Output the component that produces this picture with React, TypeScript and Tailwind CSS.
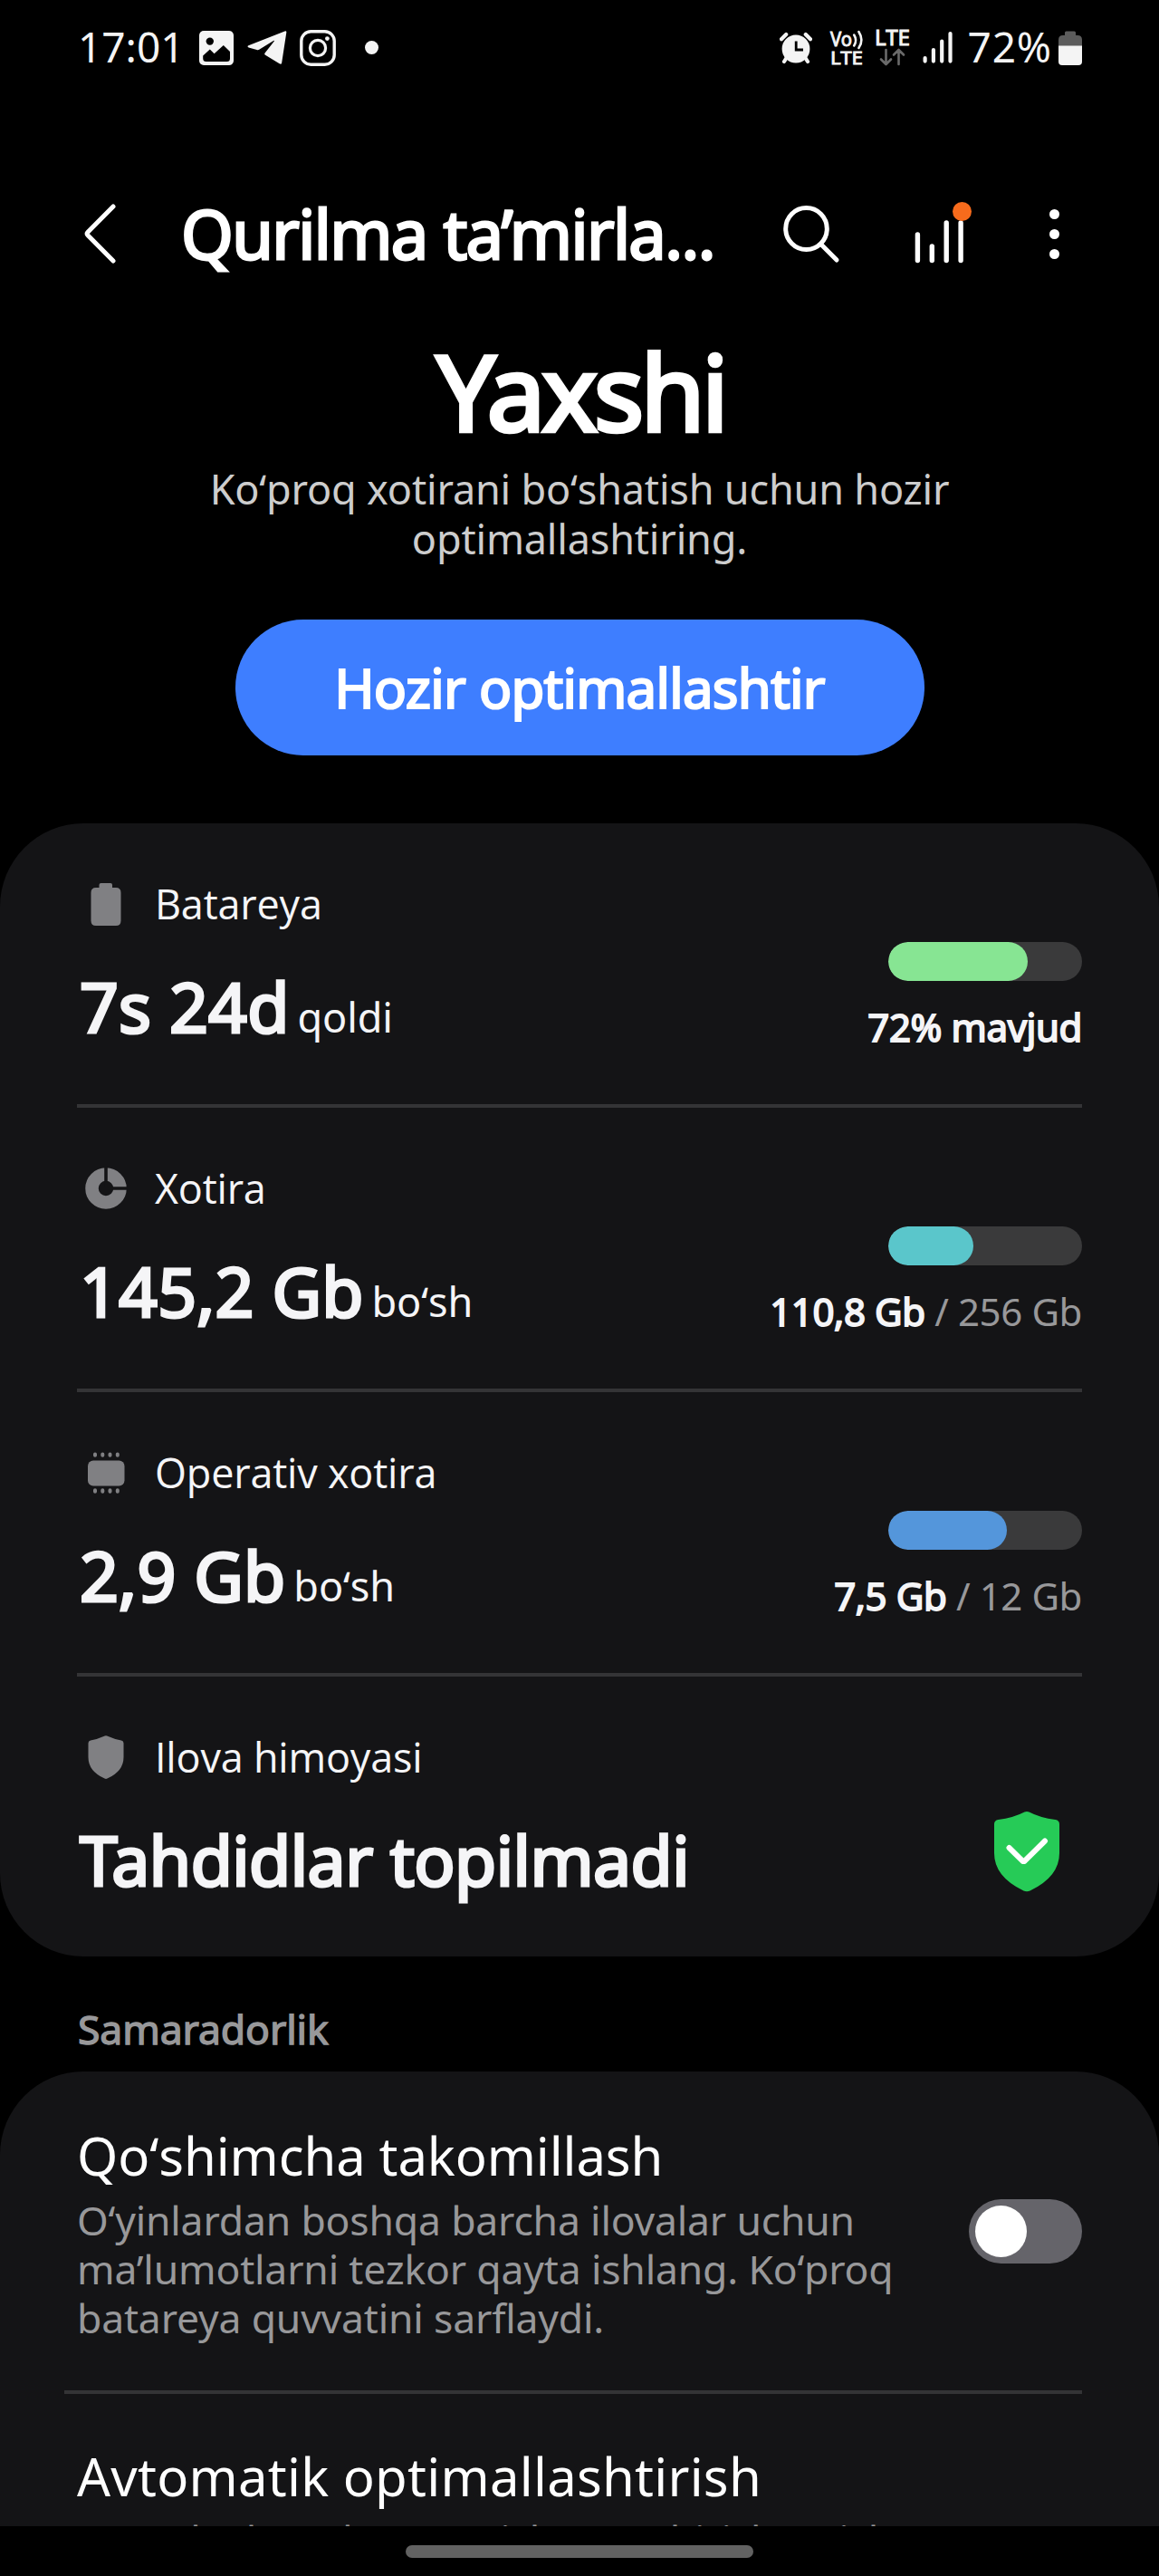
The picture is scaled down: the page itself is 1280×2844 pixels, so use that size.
import type { ReactNode } from "react";

const StatusBar: React.FC = () => {
  return (
    <div className="h-[102px] pl-[86px] pr-[85px] flex items-center justify-between text-[#f4f4f4]">
      <div className="flex items-center">
        <span className="text-[46px] leading-none">17:01</span>
        {/* gallery */}
        <svg className="ml-[16px] mt-1 w-[38px] h-[38px]" viewBox="0 0 38 38">
          <rect width="38" height="38" rx="5" fill="currentColor" />
          <circle cx="11.8" cy="11.6" r="4.2" fill="#000" />
          <path
            d="M4.2 27.5 11.8 20.6 16.6 25.2 26.8 16 34 23V30.5Q34 34 30.5 34H7.7Q4.2 34 4.2 30.5Z"
            fill="#000"
          />
        </svg>
        {/* telegram */}
        <svg className="ml-[15px] mt-1 w-[44px] h-[38px]" viewBox="0 0 44 38">
          <path
            d="M41.5.4Q43.6-.3 43.3 2L38.2 35.2Q37.8 37.6 35.6 36.3L20 26.8Q18.6 25.8 19.6 24.5L29.8 11.6Q30.3 10.4 29 10.9L13.2 20.8Q12 21.5 10.6 21L1.6 18.4Q-.6 17.4 1.4 16.2Z"
            fill="currentColor"
          />
        </svg>
        {/* instagram */}
        <svg className="ml-[14px] mt-1 w-[40px] h-[40px]" viewBox="0 0 40 40" fill="none" stroke="currentColor">
          <rect x="1.8" y="1.8" width="36.4" height="36.4" rx="10.5" strokeWidth="3.4" />
          <circle cx="20" cy="20" r="8.6" strokeWidth="3.2" />
          <circle cx="30.4" cy="9.6" r="2.4" fill="currentColor" stroke="none" />
        </svg>
        <span className="ml-[32px] mt-0.5 size-[15px] rounded-full bg-[#f4f4f4]" />
      </div>

      <div className="flex items-center">
        {/* alarm */}
        <svg className="mt-1 w-[36px] h-[36px]" viewBox="0 0 36 36">
          <circle cx="18" cy="19" r="15.4" fill="currentColor" />
          <path
            d="M2 8.2 7.2 3M34 8.2 28.8 3M7.5 29 5 33M28.5 29 31 33"
            stroke="currentColor"
            strokeWidth="4.2"
            strokeLinecap="round"
          />
          <path d="M18.2 10.5V20H26" fill="none" stroke="#000" strokeWidth="2.8" />
        </svg>
        {/* volte */}
        <svg className="ml-[20px] mt-1 w-[38px] h-[40px] overflow-visible" viewBox="0 0 38 40" fill="currentColor">
          <text x="0" y="17.5" fontSize="21" textLength="24" lengthAdjust="spacingAndGlyphs" stroke="currentColor" strokeWidth="0.9">
            Vo
          </text>
          <path
            d="M26.2 5.5Q30 11.5 26.2 17.5M31.4 2Q37.4 11.5 31.4 20"
            fill="none"
            stroke="currentColor"
            strokeWidth="2.6"
            strokeLinecap="round"
          />
          <text x="0" y="38" fontSize="20.5" textLength="36" lengthAdjust="spacingAndGlyphs" stroke="currentColor" strokeWidth="0.9">
            LTE
          </text>
        </svg>
        {/* lte */}
        <svg className="ml-[11px] mt-1 w-[40px] h-[40px] overflow-visible" viewBox="0 0 40 40" fill="currentColor">
          <text x="0" y="17" fontSize="23.5" textLength="39" lengthAdjust="spacingAndGlyphs" stroke="currentColor" strokeWidth="1">
            LTE
          </text>
          <path
            d="M12.5 22V37.5M7 32.5 12.5 38 18 32.5M26.5 38V22.5M21 27.5 26.5 22 32 27.5"
            fill="none"
            stroke="#6a6a6a"
            strokeWidth="2.6"
            strokeLinecap="round"
            strokeLinejoin="round"
          />
        </svg>
        {/* signal */}
        <svg
          className="ml-[13px] mt-0.5 w-[33px] h-[37px]"
          viewBox="0 0 33 37"
          stroke="currentColor"
          strokeWidth="4.2"
          strokeLinecap="round"
        >
          <path d="M2.6 30V33.6M11.9 21V33.6M21.2 11.5V33.6M30.5 3V33.6" />
        </svg>
        <span className="ml-[16px] text-[46px] leading-none tracking-[0.9px]">72%</span>
        {/* battery */}
        <svg className="ml-[7px] mt-1 w-[26px] h-[38px]" viewBox="0 0 26 38">
          <path d="M7 5V2Q7 .5 8.5 .5H17.5Q19 .5 19 2V5H21Q26 5 26 10V17H0V10Q0 5 5 5Z" fill="#5c5c5c" />
          <path d="M0 16.5H26V34Q26 38 22 38H4Q0 38 0 34Z" fill="currentColor" />
        </svg>
      </div>
    </div>
  );
};

const Header: React.FC = () => {
  return (
    <header className="mt-[100px] h-[112px] pl-[92px] pr-[110px] flex items-center">
      <svg className="w-[37px] h-[66px]" viewBox="0 0 37 66" fill="none" stroke="#fff" strokeWidth="5" strokeLinecap="round" strokeLinejoin="round">
        <path d="M33 3 5 31.2Q3.3 33 5 34.8L33 63" />
      </svg>
      <h1 className="ml-[71px] text-[74px] leading-none tracking-[-1.6px] whitespace-nowrap [-webkit-text-stroke:2.8px]">
        Qurilma ta’mirla...
      </h1>
      <div className="ml-auto flex items-center">
        <svg className="w-[64px] h-[66px]" viewBox="0 0 64 66" fill="none" stroke="#fff" strokeWidth="5" strokeLinecap="round">
          <ellipse cx="26.5" cy="27.5" rx="22.8" ry="23" />
          <path d="M42.5 44.5 60 62" />
        </svg>
        <div className="relative ml-[81px]">
          <svg className="w-[56px] h-[66px]" viewBox="0 0 56 66" stroke="#fff" strokeWidth="5.4" strokeLinecap="round">
            <path d="M4.4 34V62.5M20.3 47V62.5M36.2 21V62.5M52.1 21V62.5" />
          </svg>
          <span className="absolute top-[-2px] right-[-8px] size-[21px] rounded-full bg-[#f76b1c]" />
        </div>
        <div className="ml-[94px] flex flex-col gap-[11px]">
          <span className="size-[11px] rounded-full bg-white" />
          <span className="size-[11px] rounded-full bg-white" />
          <span className="size-[11px] rounded-full bg-white" />
        </div>
      </div>
    </header>
  );
};

const Hero: React.FC = () => {
  return (
    <section className="flex flex-col items-center text-center">
      <h2 className="mt-[48px] pl-[3px] text-[115px] leading-[140px] tracking-[-3.6px] [-webkit-text-stroke:4.6px]">
        Yaxshi
      </h2>
      <p className="mt-[11px] w-[900px] text-[45px] leading-[54.6px] tracking-[-0.18px] text-[#cdcdcd]">
        Koʻproq xotirani boʻshatish uchun hozir
        <br />
        optimallashtiring.
      </p>
      <button className="mt-[62px] w-[761px] h-[150px] rounded-full bg-[#3e7eff] text-white text-[60px] leading-none tracking-[-0.75px] [-webkit-text-stroke:2.2px]">
        Hozir optimallashtir
      </button>
    </section>
  );
};

const BatteryIcon = () => (
  <svg className="w-[46px] h-[50px]" viewBox="0 0 46 50" fill="#808083">
    <path d="M15.5 7V4Q15.5 2 17.5 2H28Q30 2 30 4V7H34Q39.5 7 39.5 12.5V43.5Q39.5 49 34 49H12Q6.5 49 6.5 43.5V12.5Q6.5 7 12 7Z" />
  </svg>
);

const StorageIcon = () => (
  <svg className="w-[46px] h-[50px]" viewBox="0 0 46 50">
    <circle cx="23" cy="25" r="15.5" fill="none" stroke="#808083" strokeWidth="14.5" />
    <path d="M23 23.5V1M25 25H47" stroke="#141416" strokeWidth="3.6" />
  </svg>
);

const RamIcon = () => (
  <svg className="w-[46px] h-[50px]" viewBox="0 0 46 50" fill="#808083">
    <rect x="3" y="11.5" width="40.5" height="28" rx="6" />
    <path
      d="M11 4.400V5.8M19.3 4.4V5.8M27.5 4.4V5.8M35.8 4.4V5.8M11 44.3V45.7M19.3 44.3V45.7M27.5 44.3V45.7M35.8 44.3V45.7"
      stroke="#808083"
      strokeWidth="4"
      strokeLinecap="round"
    />
  </svg>
);

const ShieldIcon = () => (
  <svg className="w-[46px] h-[50px]" viewBox="0 0 46 50" fill="#808083">
    <path d="M21.8 1.5Q23 1 24.2 1.5Q32 5 40 6.5Q42.5 7 42.5 9.5V25Q42.5 40.5 24.5 48.6Q23 49.3 21.5 48.6Q3.5 40.5 3.5 25V9.5Q3.5 7 6 6.5Q14 5 21.8 1.5Z" />
  </svg>
);

type RowProps = {
  icon: ReactNode;
  label: string;
  value: string;
  unit?: string;
  last?: boolean;
  children: ReactNode;
};

const Row: React.FC<RowProps> = ({ icon, label, value, unit, last, children }) => {
  return (
    <div
      className={
        last
          ? "h-[309px] flex justify-between"
          : "h-[314px] flex justify-between border-b-4 border-[#343436]"
      }
    >
      <div className="pt-[59px]">
        <div className="h-[60px] pl-[9px] flex items-center">
          {icon}
          <span className="ml-[31px] font-['Open_Sans'] text-[45px] leading-[60px] tracking-[-0.2px]">{label}</span>
        </div>
        <p
          className={
            unit
              ? "mt-[33px] ml-[3px] text-[75px] leading-[100px] tracking-[0.2px] whitespace-nowrap"
              : "mt-[33px] ml-[3px] text-[75px] leading-[100px] tracking-[-0.5px] whitespace-nowrap"
          }
        >
          <span className="[-webkit-text-stroke:3.2px]">{value}</span>
          {unit && <span className="ml-[9px] text-[45px] leading-none tracking-[-0.1px]">{unit}</span>}
        </p>
      </div>
      {children}
    </div>
  );
};

type UsageProps = {
  percent: number;
  color: string;
  used: string;
  total?: string;
};

const Usage: React.FC<UsageProps> = ({ percent, color, used, total }) => {
  return (
    <div className="pt-[131px] flex flex-col items-end">
      <div className="w-[214px] h-[43px] rounded-full bg-[#3a3a3b] overflow-hidden">
        <div className="h-full rounded-full" style={{ width: `${percent}%`, backgroundColor: color }} />
      </div>
      <p className="mt-[21px] text-[42px] leading-[60px] tracking-[-0.4px] whitespace-nowrap">
        <span className="[-webkit-text-stroke:1.8px]">{used}</span>
        {total && <span className="text-[#98989a]"> / {total}</span>}
      </p>
    </div>
  );
};

const App: React.FC = () => {
  return (
    <main className="w-[1280px] h-[2844px] overflow-hidden bg-black text-white font-['Noto_Sans',sans-serif]">
      <StatusBar />
      <Header />
      <Hero />

      <section className="mt-[75px] px-[85px] rounded-[92px] bg-[#141416] text-[#f5f5f7]">
        <Row icon={<BatteryIcon />} label="Batareya" value="7s 24d" unit="qoldi">
          <Usage percent={72} color="#87e593" used="72% mavjud" />
        </Row>
        <Row icon={<StorageIcon />} label="Xotira" value="145,2 Gb" unit="boʻsh">
          <Usage percent={44} color="#5ac6cb" used="110,8 Gb" total="256 Gb" />
        </Row>
        <Row icon={<RamIcon />} label="Operativ xotira" value="2,9 Gb" unit="boʻsh">
          <Usage percent={61} color="#5496db" used="7,5 Gb" total="12 Gb" />
        </Row>
        <Row icon={<ShieldIcon />} label="Ilova himoyasi" value="Tahdidlar topilmadi" last>
          <svg className="mt-[148px] mr-[24px] w-[74px] h-[90px]" viewBox="0 0 74 90">
            <path
              d="M34.5 1.5Q37 .4 39.5 1.5Q52 8 68.5 10Q73 10.8 73 15V47Q73 73 40.5 88.5Q37 90 33.5 88.5Q1 73 1 47V15Q1 10.8 5.5 10Q22 8 34.5 1.5Z"
              fill="#26cb57"
            />
            <path
              d="M17.5 41 32.2 55.5Q33.5 56.5 34.8 55.5L57 33.5"
              fill="none"
              stroke="#fff"
              strokeWidth="6"
              strokeLinecap="round"
            />
          </svg>
        </Row>
      </section>

      <h3 className="pt-[50px] pb-[17px] pl-[86px] text-[44.5px] leading-[60px] tracking-[-0.1px] text-[#98989a] [-webkit-text-stroke:1.4px]">
        Samaradorlik
      </h3>

      <section className="h-[502px] overflow-hidden rounded-t-[92px] bg-[#141416] px-[85px]">
        <div className="pt-[53px] flex justify-between">
          <div>
            <h4 className="text-[58px] leading-[80px] tracking-[-0.1px] whitespace-nowrap">Qoʻshimcha takomillash</h4>
            <p className="mt-[4px] text-[44.5px] leading-[54px] tracking-[-0.18px] whitespace-nowrap text-[#98989a]">
              Oʻyinlardan boshqa barcha ilovalar uchun
              <br />
              ma’lumotlarni tezkor qayta ishlang. Koʻproq
              <br />
              batareya quvvatini sarflaydi.
            </p>
          </div>
          <button className="mt-[88px] w-[125px] h-[71px] pl-[7px] flex items-center rounded-full bg-[#65646a]">
            <span className="size-[57px] rounded-full bg-white" />
          </button>
        </div>
        <div className="mt-[53px] -ml-[14px] h-1 bg-[#343436]" />
        <h4 className="mt-[51px] text-[58px] leading-[80px] tracking-[0.25px] whitespace-nowrap">
          Avtomatik optimallashtirish
        </h4>
        {/* runs under the navigation bar */}
        <p className="mt-[3px] text-[44.5px] leading-[54px] tracking-[-0.18px] whitespace-nowrap text-[#98989a]">
          Zarur boʻlganda qayta ishga tushirish va ish
        </p>
      </section>

      <div className="h-[54px] pt-[21px] bg-black">
        <div className="mx-auto w-[384px] h-[14px] rounded-full bg-[#626262]" />
      </div>
    </main>
  );
};

export default App;
